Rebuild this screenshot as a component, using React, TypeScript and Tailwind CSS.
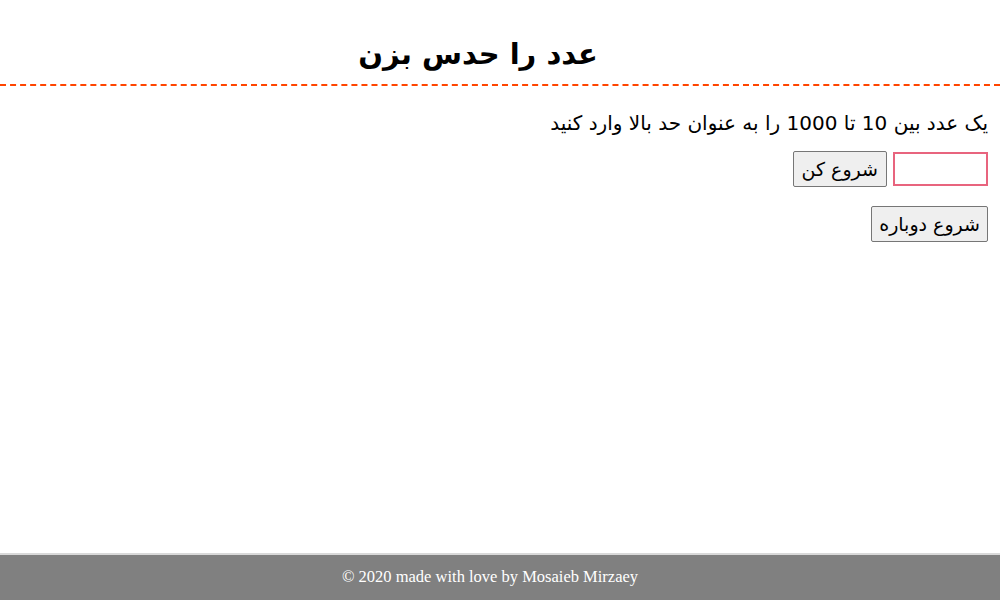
import React from "react";

export default function App() {
  return (
    <div dir="rtl" className="relative h-[600px] w-[1000px] bg-white text-black" style={{ fontFamily: '"DejaVu Sans", "Noto Sans", sans-serif' }}>
      <div className="pt-[34px]">
        <h1 className="pr-[44px] text-center text-[29px] font-bold leading-[40px]">عدد را حدس بزن</h1>
      </div>
      <div className="mt-[10px] border-t-2 border-dashed border-[#ff4500]" />
      <div className="px-[12px]">
        <p className="mt-[23px] text-[20px] leading-[28px]">یک عدد بین 10 تا 1000 را به عنوان حد بالا وارد کنید</p>
        <div className="mt-[14px] flex items-center gap-[6px]">
          <input className="h-[34px] w-[95px] border-2 border-[#e8647e] bg-white px-1 outline-none" />
          <button className="h-[36px] rounded-[2px] border border-[#767676] bg-[#efefef] px-[8px] text-[19px]">شروع کن</button>
        </div>
        <div className="mt-[19px]">
          <button className="h-[36px] rounded-[2px] border border-[#767676] bg-[#efefef] px-[7px] text-[19px]">شروع دوباره</button>
        </div>
      </div>
      <footer className="absolute bottom-0 left-0 right-0 flex h-[47px] items-center justify-center border-t-2 border-[#d9d9d9] bg-[#808080] text-[16.5px] text-white" dir="ltr" style={{ fontFamily: '"Liberation Serif", serif' }}>
        <span className="mr-[20px]">© 2020 made with love by Mosaieb Mirzaey</span>
      </footer>
    </div>
  );
}
